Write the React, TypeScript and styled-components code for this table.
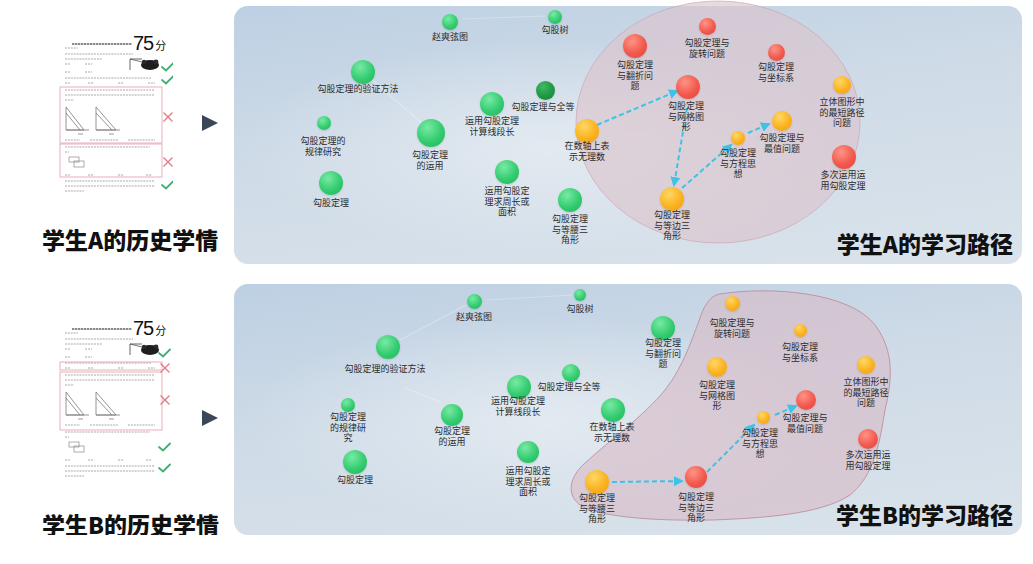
import React from "react";
import styled, { createGlobalStyle } from "styled-components";

const GlobalStyle = createGlobalStyle`
  html, body {
    margin: 0;
    padding: 0;
    background: #ffffff;
    font-family: "Noto Sans CJK SC", "Noto Sans", sans-serif;
  }
`;

type Kind = "g" | "dg" | "r" | "o";

type NodeSpec = {
  x: number;
  y: number;
  d: number;
  k: Kind;
  t: string[];
  lx?: number;
  ly: number;
};

type Pt = [number, number];

const SPHERE: Record<Kind, [string, string, string]> = {
  g: ["#78eaa4", "#34cc70", "#22b35c"],
  dg: ["#3fb965", "#1f9844", "#16803a"],
  r: ["#ff9486", "#f2594d", "#e0443a"],
  o: ["#ffd765", "#fbb21f", "#f29d0b"],
};

const nodesA: NodeSpec[] = [
  { x: 450, y: 22, d: 16, k: "g", t: ["赵爽弦图"], ly: 32 },
  { x: 555, y: 17, d: 14, k: "g", t: ["勾股树"], ly: 25 },
  { x: 363, y: 72, d: 24, k: "g", t: ["勾股定理的验证方法"], lx: 358, ly: 84 },
  { x: 545, y: 90, d: 19, k: "dg", t: ["勾股定理与全等"], lx: 543, ly: 102 },
  { x: 492, y: 104, d: 24, k: "g", t: ["运用勾股定理", "计算线段长"], ly: 116 },
  { x: 324, y: 123, d: 14, k: "g", t: ["勾股定理的", "规律研究"], lx: 323, ly: 136 },
  { x: 431, y: 133, d: 28, k: "g", t: ["勾股定理", "的运用"], lx: 430, ly: 150 },
  { x: 587, y: 131, d: 24, k: "o", t: ["在数轴上表", "示无理数"], ly: 141 },
  { x: 507, y: 172, d: 24, k: "g", t: ["运用勾股定", "理求周长或", "面积"], ly: 186 },
  { x: 331, y: 183, d: 24, k: "g", t: ["勾股定理"], ly: 198 },
  { x: 570, y: 200, d: 24, k: "g", t: ["勾股定理", "与等腰三", "角形"], ly: 214 },
  { x: 635, y: 46, d: 24, k: "r", t: ["勾股定理", "与翻折问", "题"], ly: 60 },
  { x: 707, y: 26, d: 17, k: "r", t: ["勾股定理与", "旋转问题"], ly: 38 },
  { x: 776, y: 52, d: 17, k: "r", t: ["勾股定理", "与坐标系"], ly: 62 },
  { x: 688, y: 87, d: 24, k: "r", t: ["勾股定理", "与网格图", "形"], lx: 686, ly: 101 },
  { x: 842, y: 85, d: 18, k: "o", t: ["立体图形中", "的最短路径", "问题"], ly: 97 },
  { x: 782, y: 121, d: 20, k: "o", t: ["勾股定理与", "最值问题"], ly: 133 },
  { x: 738, y: 138, d: 14, k: "o", t: ["勾股定理", "与方程思", "想"], ly: 148 },
  { x: 844, y: 157, d: 24, k: "r", t: ["多次运用运", "用勾股定理"], lx: 843, ly: 170 },
  { x: 672, y: 199, d: 24, k: "o", t: ["勾股定理", "与等边三", "角形"], ly: 210 },
];

const nodesB: NodeSpec[] = [
  { x: 474, y: 301, d: 15, k: "g", t: ["赵爽弦图"], ly: 312 },
  { x: 580, y: 295, d: 12, k: "g", t: ["勾股树"], ly: 304 },
  { x: 388, y: 347, d: 24, k: "g", t: ["勾股定理的验证方法"], lx: 385, ly: 364 },
  { x: 571, y: 373, d: 18, k: "g", t: ["勾股定理与全等"], lx: 569, ly: 382 },
  { x: 519, y: 387, d: 24, k: "g", t: ["运用勾股定理", "计算线段长"], lx: 518, ly: 396 },
  { x: 348, y: 405, d: 14, k: "g", t: ["勾股定理", "的规律研", "究"], ly: 412 },
  { x: 452, y: 415, d: 22, k: "g", t: ["勾股定理", "的运用"], ly: 426 },
  { x: 355, y: 462, d: 24, k: "g", t: ["勾股定理"], ly: 475 },
  { x: 528, y: 452, d: 22, k: "g", t: ["运用勾股定", "理求周长或", "面积"], ly: 466 },
  { x: 613, y: 410, d: 24, k: "g", t: ["在数轴上表", "示无理数"], lx: 612, ly: 422 },
  { x: 663, y: 328, d: 24, k: "g", t: ["勾股定理", "与翻折问", "题"], ly: 338 },
  { x: 732, y: 303, d: 15, k: "o", t: ["勾股定理与", "旋转问题"], ly: 318 },
  { x: 800, y: 330, d: 13, k: "o", t: ["勾股定理", "与坐标系"], ly: 342 },
  { x: 717, y: 367, d: 20, k: "o", t: ["勾股定理", "与网格图", "形"], ly: 380 },
  { x: 866, y: 365, d: 18, k: "o", t: ["立体图形中", "的最短路径", "问题"], ly: 377 },
  { x: 806, y: 400, d: 20, k: "r", t: ["勾股定理与", "最值问题"], lx: 805, ly: 413 },
  { x: 763, y: 417, d: 13, k: "o", t: ["勾股定理", "与方程思", "想"], lx: 760, ly: 428 },
  { x: 868, y: 439, d: 20, k: "r", t: ["多次运用运", "用勾股定理"], ly: 450 },
  { x: 696, y: 477, d: 22, k: "r", t: ["勾股定理", "与等边三", "角形"], ly: 492 },
  { x: 597, y: 482, d: 24, k: "o", t: ["勾股定理", "与等腰三", "角形"], ly: 493 },
];

const arrowsA: [Pt, Pt][] = [
  [[597, 125], [677, 91]],
  [[687, 108], [674, 185]],
  [[682, 188], [731, 145]],
  [[748, 133], [769, 124]],
];

const arrowsB: [Pt, Pt][] = [
  [[612, 482], [682, 481]],
  [[707, 472], [754, 425]],
  [[775, 415], [796, 406]],
];

const faintA: [Pt, Pt][] = [
  [[372, 80], [423, 124]],
  [[462, 19], [545, 16]],
  [[622, 135], [655, 135]],
];

const faintB: [Pt, Pt][] = [
  [[400, 340], [466, 305]],
  [[487, 300], [572, 295]],
  [[405, 388], [440, 402]],
];

const BLOB_B =
  "M 720 294 C 770 286, 850 292, 875 325 C 895 352, 892 380, 885 410 " +
  "C 880 440, 875 475, 850 495 C 820 515, 760 518, 713 520 " +
  "C 660 521, 610 518, 585 508 C 565 498, 568 478, 585 463 " +
  "C 610 440, 645 415, 665 390 C 685 365, 695 330, 703 310 " +
  "C 708 300, 713 295, 720 294 Z";

/* ---------- layout ---------- */

const Page = styled.div`
  display: flex;
  flex-direction: column;
  gap: 20px;
  padding: 6px 11px 0 0;
  width: 1033px;
  box-sizing: border-box;
`;

const Row = styled.section<{ $h: number }>`
  display: flex;
  height: ${(p) => p.$h}px;
`;

const LeftCol = styled.div<{ $top: number }>`
  width: 234px;
  flex-shrink: 0;
  display: flex;
  flex-direction: column;
  padding-top: ${(p) => p.$top}px;
  box-sizing: border-box;
`;

const DocRow = styled.div`
  display: flex;
  align-items: flex-start;
  padding-left: 58px;
`;

const DocWrap = styled.div`
  position: relative;
  width: 115px;
  height: 162px;
`;

const Score = styled.div`
  position: absolute;
  left: 75px;
  top: 0;
  display: flex;
  align-items: baseline;
  color: #111;
  font-family: "Liberation Sans", "Noto Sans CJK SC", sans-serif;
  font-size: 20px;
  letter-spacing: -1px;
  line-height: 20px;
  background: rgba(255, 255, 255, 0.85);

  small {
    font-family: "Noto Sans CJK SC", sans-serif;
    font-size: 11px;
    letter-spacing: 0;
    margin-left: 2px;
  }
`;

const PlayArrow = styled.div<{ $top: number }>`
  margin-left: 29px;
  margin-top: ${(p) => p.$top}px;
  width: 0;
  height: 0;
  border-top: 8.5px solid transparent;
  border-bottom: 8.5px solid transparent;
  border-left: 16px solid #3a4758;
`;

const SideLabel = styled.h2`
  margin: 29px 0 0 42px;
  font-size: 23px;
  line-height: 30px;
  font-weight: 900;
  color: #111;
  white-space: nowrap;
`;

const Panel = styled.div`
  position: relative;
  width: 788px;
  height: 100%;
  border-radius: 14px;
  background:
    radial-gradient(ellipse 55% 60% at 40% 55%, rgba(233, 239, 244, 0.75), rgba(233, 239, 244, 0) 70%),
    linear-gradient(172deg, #bdd0e3 0%, #cfdbe7 45%, #dae3eb 100%);
  display: flex;
  justify-content: flex-end;
  align-items: flex-end;
  padding: 0 9px 6px 0;
  box-sizing: border-box;
`;

const Overlay = styled.svg`
  position: absolute;
  left: 0;
  top: 0;
  width: 100%;
  height: 100%;
  overflow: visible;
  pointer-events: none;
`;

const Dot = styled.div<{ $k: Kind }>`
  position: absolute;
  border-radius: 50%;
  background: radial-gradient(
    circle at 38% 30%,
    ${(p) => SPHERE[p.$k][0]} 0%,
    ${(p) => SPHERE[p.$k][1]} 55%,
    ${(p) => SPHERE[p.$k][2]} 100%
  );
  box-shadow: 0 1px 2px rgba(60, 80, 100, 0.18);
`;

const NodeLabel = styled.div`
  position: absolute;
  transform: translateX(-50%);
  font-size: 9px;
  line-height: 10.6px;
  color: #2b2b2b;
  text-align: center;
  white-space: nowrap;
`;

const PathTitle = styled.h3`
  position: relative;
  margin: 0;
  font-size: 23px;
  line-height: 30px;
  font-weight: 900;
  color: #111;
  white-space: nowrap;
`;

/* ---------- exam thumbnail ---------- */

const TEXT_LINES: [number, number, number][] = [
  [7, 20, 15], [7, 97, 21], [7, 44, 26],
  [7, 12, 31], [27, 34, 31],
  [7, 12, 39], [27, 34, 39],
  [7, 94, 45],
  [7, 12, 50], [30, 36, 50], [60, 66, 50], [90, 97, 50],
  [7, 97, 57], [7, 97, 62], [7, 16, 67],
  [7, 22, 107], [32, 60, 107], [70, 97, 107],
  [7, 92, 114], [7, 11, 119],
  [7, 12, 142], [30, 36, 142], [60, 66, 142], [88, 94, 142],
  [7, 97, 148], [7, 97, 153], [7, 26, 158],
];

type DocProps = {
  boxes: [number, number][];
  checks: number[];
  crosses: number[];
  markX: number;
};

function ExamThumb({ boxes, checks, crosses, markX }: DocProps) {
  return (
    <DocWrap>
      <svg width="115" height="162" viewBox="0 0 115 162">
        <line x1="14" y1="11" x2="74" y2="11" stroke="#666" strokeWidth="1.6" strokeDasharray="2.4 0.6" />
        {TEXT_LINES.map(([a, b, y], i) => (
          <line key={i} x1={a} y1={y} x2={b} y2={y} stroke="#a9a9a9" strokeWidth="1.2" strokeDasharray="2 0.9" />
        ))}
        {/* picture of question 1 */}
        <polyline points="72,37 72,26 84,26" fill="none" stroke="#555" strokeWidth="0.9" />
        <line x1="72" y1="26" x2="88" y2="30" stroke="#555" strokeWidth="0.8" />
        <ellipse cx="92" cy="32" rx="9" ry="5" fill="#1e1e1e" />
        <circle cx="86" cy="29" r="2.2" fill="#2a2a2a" />
        <circle cx="98" cy="29" r="2.4" fill="#2a2a2a" />
        {/* triangles */}
        <path d="M8 74 L8 97 L26 97 Z M8 80 L22 97" fill="none" stroke="#7a7a7a" strokeWidth="0.8" />
        <line x1="8" y1="97" x2="31" y2="97" stroke="#7a7a7a" strokeWidth="0.8" />
        <path d="M38 74 L38 97 L58 97 Z M38 80 L54 97" fill="none" stroke="#7a7a7a" strokeWidth="0.8" />
        <line x1="38" y1="97" x2="62" y2="97" stroke="#7a7a7a" strokeWidth="0.8" />
        <line x1="20" y1="101" x2="25" y2="101" stroke="#999" strokeWidth="1" />
        <line x1="51" y1="101" x2="56" y2="101" stroke="#999" strokeWidth="1" />
        {/* small figure */}
        <rect x="11" y="124" width="10" height="5" fill="none" stroke="#8a8a8a" strokeWidth="0.7" />
        <rect x="16" y="128" width="10" height="6" fill="none" stroke="#8a8a8a" strokeWidth="0.7" />
        {boxes.map(([y1, y2], i) => (
          <rect key={i} x="2" y={y1} width="102" height={y2 - y1} fill="none" stroke="#e6a6ae" strokeWidth="0.9" />
        ))}
        {checks.map((y, i) => (
          <path key={i} d={`M${markX - 6} ${y} L${markX - 2} ${y + 3.5} L${markX + 5} ${y - 3.5}`} fill="none" stroke="#3fae72" strokeWidth="1.8" strokeLinecap="round" />
        ))}
        {crosses.map((y, i) => (
          <path key={i} d={`M${markX - 4.5} ${y - 4.5} L${markX + 4.5} ${y + 4.5} M${markX + 4.5} ${y - 4.5} L${markX - 4.5} ${y + 4.5}`} fill="none" stroke="#e27888" strokeWidth="1.3" />
        ))}
      </svg>
      <Score>
        75<small>分</small>
      </Score>
    </DocWrap>
  );
}

/* ---------- knowledge map panel ---------- */

type PanelProps = {
  ox: number;
  oy: number;
  nodes: NodeSpec[];
  arrows: [Pt, Pt][];
  faint: [Pt, Pt][];
  region: React.ReactNode;
  title: string;
  markerId: string;
};

function PathPanel({ ox, oy, nodes, arrows, faint, region, title, markerId }: PanelProps) {
  return (
    <Panel>
      <Overlay>
        <defs>
          <marker id={markerId} viewBox="0 0 10 10" refX="8" refY="5" markerWidth="5" markerHeight="5" orient="auto">
            <path d="M0 0 L10 5 L0 10 Z" fill="#3cc3e6" />
          </marker>
        </defs>
        <g transform={`translate(${-ox} ${-oy})`}>
          {faint.map(([a, b], i) => (
            <line key={i} x1={a[0]} y1={a[1]} x2={b[0]} y2={b[1]} stroke="#ffffff" strokeOpacity="0.28" strokeWidth="1.2" />
          ))}
          {region}
          {arrows.map(([a, b], i) => (
            <line
              key={i}
              x1={a[0]}
              y1={a[1]}
              x2={b[0]}
              y2={b[1]}
              stroke="#3cc3e6"
              strokeWidth="2"
              strokeDasharray="5 3"
              markerEnd={`url(#${markerId})`}
            />
          ))}
        </g>
      </Overlay>
      {nodes.map((n, i) => (
        <React.Fragment key={i}>
          <Dot
            $k={n.k}
            style={{ left: n.x - ox - n.d / 2, top: n.y - oy - n.d / 2, width: n.d, height: n.d }}
          />
          <NodeLabel style={{ left: (n.lx ?? n.x) - ox, top: n.ly - oy }}>
            {n.t.map((line, j) => (
              <React.Fragment key={j}>
                {j > 0 && <br />}
                {line}
              </React.Fragment>
            ))}
          </NodeLabel>
        </React.Fragment>
      ))}
      <PathTitle>{title}</PathTitle>
    </Panel>
  );
}

export default function App() {
  return (
    <>
      <GlobalStyle />
      <Page>
        <Row $h={258}>
          <LeftCol $top={27}>
            <DocRow>
              <ExamThumb boxes={[[54, 110], [111, 144]]} checks={[34, 47, 152]} crosses={[84, 129]} markX={110} />
              <PlayArrow $top={82} />
            </DocRow>
            <SideLabel>学生A的历史学情</SideLabel>
          </LeftCol>
          <PathPanel
            ox={234}
            oy={6}
            nodes={nodesA}
            arrows={arrowsA}
            faint={faintA}
            markerId="arrA"
            title="学生A的学习路径"
            region={
              <ellipse cx="718" cy="122" rx="142" ry="121" fill="#dcc3cc" fillOpacity="0.62" stroke="#c99aa6" strokeOpacity="0.7" strokeWidth="0.8" />
            }
          />
        </Row>
        <Row $h={251}>
          <LeftCol $top={34}>
            <DocRow>
              <ExamThumb boxes={[[44, 52], [54, 112]]} checks={[35, 129, 150]} crosses={[50, 82]} markX={107} />
              <PlayArrow $top={92} />
            </DocRow>
            <SideLabel>学生B的历史学情</SideLabel>
          </LeftCol>
          <PathPanel
            ox={234}
            oy={284}
            nodes={nodesB}
            arrows={arrowsB}
            faint={faintB}
            markerId="arrB"
            title="学生B的学习路径"
            region={<path d={BLOB_B} fill="#d8bcc6" fillOpacity="0.62" stroke="#b98894" strokeWidth="0.8" />}
          />
        </Row>
      </Page>
    </>
  );
}
